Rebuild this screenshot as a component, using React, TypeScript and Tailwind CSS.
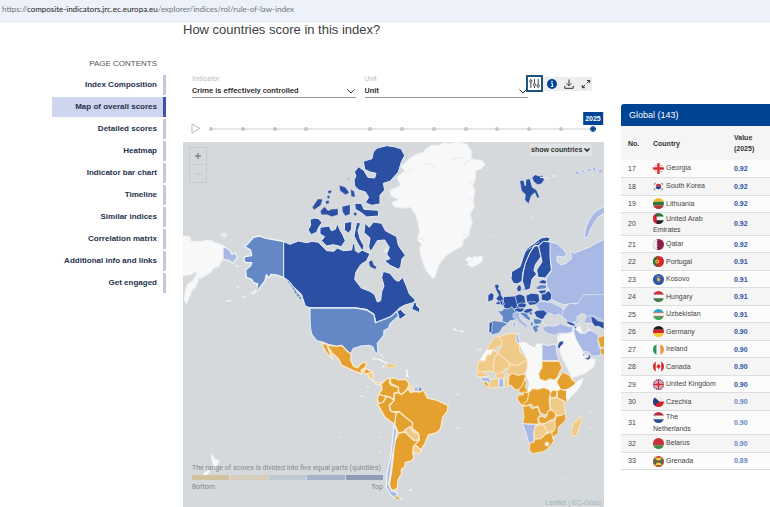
import { useState } from 'react';
import type { ReactNode } from 'react';

const sections = [
  'Index Composition',
  'Map of overall scores',
  'Detailed scores',
  'Heatmap',
  'Indicator bar chart',
  'Timeline',
  'Similar indices',
  'Correlation matrix',
  'Additional info and links',
  'Get engaged',
];

const years = [2013, 2014, 2015, 2016, null, 2018, 2019, 2020, 2021, 2022, 2023, 2024, 2025];

const hBands = (a: string, b: string, c: string) => (
  <>
    <path fill={a} d="M0 0h12v4H0z" />
    <path fill={b} d="M0 4h12v4H0z" />
    <path fill={c} d="M0 8h12v4H0z" />
  </>
);

const vBands = (a: string, b: string, c: string) => (
  <>
    <path fill={a} d="M0 0h4v12H0z" />
    <path fill={b} d="M4 0h4v12H4z" />
    <path fill={c} d="M8 0h4v12H8z" />
  </>
);

const flags: Record<string, ReactNode> = {
  ge: (
    <>
      <path fill="#f4f4f4" d="M0 0h12v12H0z" />
      <path fill="#e02a33" d="M4.700 0h2.600v4.700H12v2.600H7.300V12H4.700V7.300H0V4.700h4.700zM2.6 2.6h1v1h-1zM8.6 2.6h1v1h-1zM2.6 8.6h1v1h-1zM8.6 8.6h1v1h-1z" />
    </>
  ),
  kr: (
    <>
      <path fill="#f4f4f4" d="M0 0h12v12H0z" />
      <path fill="#c8313e" d="M3 6a3 3 0 0 1 6 0z" />
      <path fill="#1d3f8a" d="M3 6a3 3 0 0 0 6 0z" />
      <path stroke="#333" strokeWidth=".9" d="M1.2 4l1.3-2M9.5 2l1.3 2M1.2 8l1.3 2M9.5 10l1.3-2" />
    </>
  ),
  lt: hBands('#f3b72b', '#2c7a3d', '#b8343a'),
  ae: (
    <>
      {hBands('#1f7a3c', '#f4f4f4', '#222')}
      <path fill="#d0202c" d="M0 0h4v12H0z" />
    </>
  ),
  qa: (
    <>
      <path fill="#8a1f4b" d="M0 0h12v12H0z" />
      <path fill="#eee" d="M0 0h4l1 1.5L4 3l1 1.5L4 6l1 1.5L4 9l1 1.5L4 12H0z" />
    </>
  ),
  pt: (
    <>
      <path fill="#d8262c" d="M0 0h12v12H0z" />
      <path fill="#2c7a35" d="M0 0h4.5v12H0z" />
      <circle cx="4.7" cy="6" r="2.2" fill="#f6d33c" />
      <circle cx="4.7" cy="6" r="1" fill="#d8262c" />
    </>
  ),
  xk: (
    <>
      <path fill="#2b57a5" d="M0 0h12v12H0z" />
      <path fill="#d9b35a" d="M4 5l2-1.4L8.4 6 6.5 8.8 4.6 7.4z" />
      <path stroke="#eee" strokeWidth=".8" strokeDasharray=".8 .7" d="M3 3.4q3-1.8 6 0" fill="none" />
    </>
  ),
  hu: hBands('#c8303c', '#f4f4f4', '#3f7d4c'),
  uz: (
    <>
      {hBands('#31a3cc', '#f4f4f4', '#35a851')}
      <path stroke="#d33" strokeWidth=".6" d="M0 4h12M0 8h12" />
    </>
  ),
  de: hBands('#1c1c1c', '#d8202a', '#f5c629'),
  ie: vBands('#2f9455', '#f6f6f6', '#ee9540'),
  ca: (
    <>
      {vBands('#d8262c', '#f6f6f6', '#d8262c')}
      <path fill="#f6f6f6" d="M3 0h6v12H3z" />
      <path fill="#d8262c" d="M6 3l.7 1.3.8-.3-.1 1.2 1.3.2-.9 1 .3.7-1.7.2V9h-.8V7.300l-1.700-.2.3-.7-.9-1 1.300-.2L4.500 4l.8.3z" />
    </>
  ),
  gb: (
    <>
      <path fill="#253a80" d="M0 0h12v12H0z" />
      <path stroke="#f4f4f4" strokeWidth="2" d="M0 0l12 12M12 0L0 12" />
      <path stroke="#d3273a" strokeWidth=".8" d="M0 0l12 12M12 0L0 12" />
      <path stroke="#f4f4f4" strokeWidth="3.600" d="M6 0v12M0 6h12" />
      <path stroke="#d3273a" strokeWidth="2" d="M6 0v12M0 6h12" />
    </>
  ),
  cz: (
    <>
      <path fill="#eee" d="M0 0h12v6H0z" />
      <path fill="#d3222c" d="M0 6h12v6H0z" />
      <path fill="#223f85" d="M0 0l7 6-7 6z" />
    </>
  ),
  nl: hBands('#b5323f', '#f4f4f4', '#2c4e92'),
  by: (
    <>
      <path fill="#c63237" d="M0 0h12v8H0z" />
      <path fill="#3f8c3d" d="M0 8h12v4H0z" />
    </>
  ),
  gd: (
    <>
      <path fill="#cf2c33" d="M0 0h12v12H0z" />
      <path fill="#2d8048" d="M1.500 2h9v8h-9z" />
      <path fill="#f4d03c" d="M1.500 2h9L6 6zM1.500 10h9L6 6z" />
      <circle cx="6" cy="6" r="1.500" fill="#cf2c33" />
    </>
  ),
};

const rows = [
  { no: 17, flag: 'ge', name: 'Georgia', value: '0.92' },
  { no: 18, flag: 'kr', name: 'South Korea', value: '0.92' },
  { no: 19, flag: 'lt', name: 'Lithuania', value: '0.92' },
  { no: 20, flag: 'ae', name: 'United Arab\nEmirates', value: '0.92' },
  { no: 21, flag: 'qa', name: 'Qatar', value: '0.92' },
  { no: 22, flag: 'pt', name: 'Portugal', value: '0.91' },
  { no: 23, flag: 'xk', name: 'Kosovo', value: '0.91' },
  { no: 24, flag: 'hu', name: 'Hungary', value: '0.91' },
  { no: 25, flag: 'uz', name: 'Uzbekistan', value: '0.91' },
  { no: 26, flag: 'de', name: 'Germany', value: '0.90' },
  { no: 27, flag: 'ie', name: 'Ireland', value: '0.90' },
  { no: 28, flag: 'ca', name: 'Canada', value: '0.90' },
  { no: 29, flag: 'gb', name: 'United Kingdom', value: '0.90' },
  { no: 30, flag: 'cz', name: 'Czechia', value: '0.90' },
  { no: 31, flag: 'nl', name: 'The\nNetherlands', value: '0.90' },
  { no: 32, flag: 'by', name: 'Belarus', value: '0.90' },
  { no: 33, flag: 'gd', name: 'Grenada', value: '0.89' },
];

// quintile colours, bottom to top
const Q1 = '#e5a12f';
const Q2 = '#f0ca88';
const Q3 = '#a9b8e4';
const Q4 = '#6487c6';
const Q5 = '#2a4fa3';
const NONE = '#f7f8f7';
const SEA = '#d5d9dc';

function WorldMap() {
  return (
    <svg viewBox="0 0 421 365" className="block w-full bg-[#d5d9dc]" role="img" aria-label="World map of scores">
      {/* Bering Strait and Alaska */}
      <g transform="translate(0 -2) scale(.33333)" stroke="#eef3f8" strokeWidth="4" strokeLinejoin="round">
        <path fill={NONE} d="M-3 288L20 290L24 304L60 305L66 301L84 302L94 308L120 316V358L110 370L108 378L90 385L84 396L70 405L55 414L42 412L46 420L38 440L26 452L20 468L10 490L4 480L8 450L14 434L28 424L42 400L38 392L28 402L-3 408z" />
        <path fill={Q3} d="M120 318L140 330L146 342L158 340L163 354L148 370L138 361L120 358z" />
        <path fill="none" d="M115 284l8-4 8 5-7 6zM157 376l10 5M162 442l6-2M130 482l14 1M176 473l14-5M200 462l10-7" />
        <path fill={Q4} d="M228 288L250 295L278 300L302 305V412L280 405L264 403L258 414L250 404L246 422L240 430L225 450L210 463L222 444L224 432L212 428L206 418L190 412L188 390L203 377L206 368L188 368L182 358L186 350L206 347L203 330L185 320L200 305L212 292z" />
        <path fill="none" stroke={Q4} strokeWidth="6" d="M316 422l14 17 9 19 15 18" strokeDasharray="9 3" />
      </g>

      {/* Canada, its arctic islands and Greenland */}
      <g transform="translate(107 -2) scale(.33333)" stroke="#e6edf6" strokeWidth="3" strokeLinejoin="round">
        <path fill={NONE} d="M345 68L360 54L376 44L400 36L408 26L425 15L445 16L460 8L482 10L505 5L530 12L546 34L543 54L560 60L575 60L586 74L572 88L558 92L556 118L548 138L556 152L550 178L553 200L541 222L547 248L540 270L535 288L520 300L518 318L490 332L465 350L446 376L435 412L428 415L410 395L400 372L393 348L388 328L394 312L382 300L388 275L384 250L376 222L362 202L335 205L312 200L305 187L325 180L302 166L300 150L332 137L320 112L345 92L332 80z" />
        <path fill="none" stroke="#dfe2e4" strokeWidth="2" d="M402 70l22 3 14 14M482 58l22-5 16 4M540 60l-22 16M556 120l-20 8M550 182l-14-5M538 292l-22-14M382 298l14-2 6 10M348 95l20-8" />
        <path fill={NONE} d="M526 360L536 350L547 354L556 348L562 352L570 346L578 352L577 364L562 375L546 382L532 374L536 366z" />
        <path fill={Q5} d="M250 36L262 24L290 17L312 20L333 26L344 46L334 66L325 96L300 124L280 130L284 150L270 166L270 192L245 196L226 188L236 172L226 156L206 150L194 138L192 120L198 108L193 96L206 80L222 92L234 112L254 114L258 100L240 96L224 88L220 64L246 56z" />
        <path fill={Q5} d="M194 190L214 190L222 208L265 211L266 228L230 231L212 217L196 208z" />
        <path fill={Q5} strokeWidth="1" d="M148 136L166 142L178 158L166 164L150 152zM182 148L192 154L196 170L184 170zM173 114l5 2-2 5zM113 154l8-4 5 6-9 6zM111 168l7-2 2 8-7 2zM67 202L76 188L84 177L98 178L92 196L72 210zM91 213L104 200L114 212L124 208L144 206L144 224L126 230L112 224L94 224zM106 184l10-3 2 8-9 4zM156 200L180 194V222L166 228L158 216zM192 216l9 4-3 8-7-4z" />
        <path fill={Q5} d="M60 238L74 234L86 236L96 248L86 262L80 277L64 284L54 270L62 256zM90 262L118 258L124 272L136 268L142 250L150 270L158 284L166 302L154 320L130 314L110 318L94 302L104 290L90 282zM164 248L186 244L184 268L176 280L163 270zM200 246L212 250L204 272L210 296L222 318L218 334L204 312L192 288z" />
        <path fill={Q5} d="M225 250L238 262L250 246L275 250L286 272L320 290L325 316L346 346L336 356L332 380L326 388L300 376L284 362L300 356L290 342L298 322L284 300L262 302L248 326L240 334L236 320L240 294L222 278z" />
        <path fill={NONE} stroke="none" d="M285 322l8 4-3 14-7-4z" opacity=".7" />
        <path fill={Q5} d="M-19 305L0 313L25 303L50 308L66 304L85 307L100 322L110 332L132 334L142 324L160 332L185 330L188 310L194 312L196 332L206 338L216 330L240 341L230 362L212 374L198 396L194 418L214 444L240 454L254 464L262 486L272 482L275 456L282 438L275 412L280 394L300 400L316 420L326 424L338 412L350 440L358 462L376 480L370 488L345 495L328 504L318 516L332 508L340 518L350 524L330 538L320 522L300 532L282 540L258 549L252 522L230 508L195 503H60L46 498L34 462L10 440L-2 424L-19 412z" />
        <path fill={Q5} d="M236 366L246 360L252 376L260 380L256 388L240 380z" strokeWidth="1" />
        <path fill={Q5} d="M365 508L372 488L378 486L380 498L390 506L388 518L376 512z" />
        <path fill="none" strokeDasharray="5 4" d="M2 432l12 12 8 14 14 15 6 18" />
      </g>

      {/* USA, Central and South America */}
      <g transform="translate(107 138) scale(.33333)" stroke="#fbe9c8" strokeWidth="4" strokeLinejoin="round">
        <path stroke="#dce7f6" fill={Q4} d="M60 84H196L230 90L252 104L256 128L282 118L302 110L320 94L326 108L310 122L300 132L296 144L282 152L281 166L262 190L264 220L256 218L248 200L236 196L215 198L190 206L182 222L170 212L155 196L140 199L115 193L95 186L80 182L66 165L62 150L60 120z" />
        <path fill={Q1} d="M95 187L115 196L140 199L155 196L170 212L183 222L182 240L190 258L202 264L214 250L230 245L226 262L214 270L224 276L212 280L190 272L155 256L145 236L126 218L112 198L120 220L130 238L112 222L102 206z" />
        <path fill={Q1} d="M213 272l10 2 4-10 10 7 12 3-8 7-12 0-12-3z" />
        <path fill={Q2} d="M232 281l16-5 2 14-3 10-9-6z" />
        <path fill={Q2} stroke="#fbf3e2" strokeWidth="3" d="M248 302L258 308L272 309L284 305L288 310L270 315L254 312z" />
        <path fill="none" stroke="#f8f8f4" strokeWidth="4" d="M246 238l10-3 14 4 14 8 8 2M272 222l2 6M280 230l3 5M276 260h7M348 268l4 6M352 282l3 10M352 272l-2 18" />
        <path fill={Q2} strokeWidth="2" d="M290 254l10-3 12 3 8 6-11 2-9 2-12-3z" />
        <path fill={Q1} d="M286 300L300 292L298 308L304 316L326 322L325 336L312 340V360L298 350L276 346L266 342L276 328L274 312z" />
        <path fill={Q1} d="M300 296L312 294L324 299H348L358 312L352 326L344 336L334 344L326 338L325 321L303 311z" />
        <path fill="#f4ddb0" strokeWidth="2" d="M358 312l8 5 7 6-4 6 3 7-7 2-7-13-3-6z" />
        <path fill={Q3} strokeWidth="2" stroke="#eef3f8" d="M373 321l12-1 0 13-13 1z" />
        <path fill={Q4} strokeWidth="2" stroke="#eef3f8" d="M387 320l10 7-7 8-4-3z" />
        <path fill={Q1} d="M265 343L290 350L280 366L268 373L262 360z" />
        <path fill={Q1} d="M262 373L280 366L290 350L300 352L314 361L298 376L300 390L320 400L318 424L312 432L285 412L270 385z" />
        <path fill={Q1} d="M313 360V340L326 338L334 344L344 336L354 326L362 338L372 334L390 336L400 330L412 354L438 360L474 376L472 394L458 412L452 446L440 458L415 465L405 490L392 510L372 492L388 478L385 460L366 444L368 428L346 412L326 395L304 395L298 378z" />
        <path fill={Q1} d="M318 400L328 395L346 412L368 428L366 442L345 450L342 456L326 459L314 434z" />
        <path fill={Q2} d="M345 450L360 440L370 456L386 462V480L372 482L350 466z" />
        <path fill={Q2} d="M372 492L396 512L385 521L370 516z" />
        <path fill={Q1} d="M326 459L345 456L372 482L388 480L370 500L368 520L372 532L365 542L346 548L345 560L334 568L335 580L324 600L322 626L305 632L298 615L304 580L310 530L312 490z" />
        <path fill={Q3} stroke="#eef3f8" d="M312 432L320 452L316 480L308 525L302 575L296 612L304 632L322 638L320 657L302 645L289 622L291 580L302 530L308 480z" />
        <path fill={Q1} strokeWidth="2" d="M315 645l4 14 12-3z" />
        <path fill="none" stroke="#f4f6f7" strokeWidth="4" d="M330 656h8M357 630h10M211 348l8 3M232 318l3 4M490 147l12 4M508 153l10 2M500 343h5M500 444h5M268 515h4M265 473h4M148 473h4" />
      </g>

      {/* Northern Europe and Russia */}
      <g transform="translate(287 -2) scale(.33333)" stroke="#e6edf8" strokeWidth="3" strokeLinejoin="round">
        <path fill={Q5} strokeWidth="2" d="M149 122L160 120L166 138L168 118L180 116L187 142L200 150L209 172L202 175L194 158L184 168L176 192L164 180L166 164L154 152zM186 112L196 104L208 108L218 106L223 120L214 132L202 134L190 124z" />
        <path fill={Q3} d="M314 98l10-6 5 7-7 6zM334 92l8-3 2 8-9 2zM350 88l12-4 2 9-8 3zM368 84l10-4-1 14-9-2zM384 92l10-5 6 8-10 6zM346 103l9-1-2 7zM362 102l8 3-7 4z" strokeWidth="2" />
        <path fill={Q3} d="M342 291L348 260L358 238L372 218L386 208L403 200V218L384 232L372 250L360 272L354 292z" />
        <path fill={Q3} d="M238 304L262 312L278 326L290 342L284 352L262 348L260 362L272 375L288 370L304 356L302 332L312 340L345 326L358 322L378 310L403 298V550H313L314 518L320 490L280 494L246 480L240 455L230 436L228 416L245 392L240 350z" />
        <path fill={Q5} d="M241 294L236 304L220 305L206 316L192 318L181 336L166 372L158 400L156 424L142 432L130 430L123 416L125 395L150 380L160 350L168 328L195 308L214 294L230 291z" />
        <path fill={Q5} d="M181 336L194 318L206 318L213 350L196 374L192 392L200 402L186 418L181 446L166 452L157 424L160 396L166 370z" />
        <path fill={Q5} d="M206 318L220 304L240 306V350L244 390L226 414L204 412L200 390L216 366L212 346z" />
        <path fill="none" stroke="#e6edf8" strokeWidth="2" d="M165 335l9-7 12-6 9-9 14-7" />
        <path fill={Q5} strokeWidth="2" d="M143 437l8-3 3 9-1 11-9 1-4-8zM157 447l6-2-1 9zM207 424l12-5 10 3-1 10-13-1-7-2zM203 452L228 449V460L214 463zM214 462L224 458L238 452L245 464L244 478L232 484L214 480zM168 466L184 460L206 462L209 482L200 494L170 488zM134 467L150 462L164 468L167 490L166 502L150 514L134 506L130 490z" />
        <path fill={Q4} strokeWidth="2" d="M199 440l12-6 17 1 2 10-12 2-9 1-10 1z" />
        <path fill={Q5} strokeWidth="2" d="M73 436L82 432L88 438L84 446L92 454L94 466L104 480L100 490L82 494L76 490L86 484L78 476L86 466L78 450zM54 466L64 458L72 464L70 480L54 486z" />
        <path fill="none" strokeWidth="4" d="M92 410l3 4M60 287l4 2M183 232l6 3M210 112h12M226 114h9M248 108h10" />
      </g>

      {/* Southern Europe, Middle East and Africa */}
      <g transform="translate(277 158) scale(.33333)" stroke="#fbe7c2" strokeWidth="3" strokeLinejoin="round">
        <g stroke="#e9eff8" strokeWidth="2">
          <path fill={Q3} d="M240 3l35 5 30 15 14 25-20 2-30-4-20 2-12-18-10-14z" />
          <path fill={Q3} d="M310 30l18-20 24 2 20-28h64v84l-24-15-20-8-14 5-16-8-14 10 2 12-20 5-16-5-8-18z" />
          <path fill={Q5} d="M118 3l12-1 3 12-9 3zM131-10l34-2 6 22 2 8-10 10-28-1-8-14zM171 14l14-6 16 5-6 10-16 2zM160 28l20-5 12 0 3 9-14 5-17-1zM190 29l24-5 5 9-10 8-19-3zM201 6l24-1 8 8-24 3zM206 37l12-3-3 11-10-2z" />
          <path fill={Q5} d="M222 37l10-6 19-1 8 7 6 9-8 11-14 1-14-7z" />
          <path fill={Q4} d="M112 32L126 33L132 25L144 27L156 20L164 32L172 34V58L150 62L142 70L126 65L128 50z" />
          <path fill={Q4} d="M88 65L104 62L130 66L144 72L128 82L118 98L98 104L90 98z" />
          <path fill={Q5} d="M88 66l10 3-3 13 1 14-9 2z" />
          <path fill={Q3} d="M160 40l15-4 6 5-4 8 9 13 18 14-4 4-4 9-4-11-16-12-8-11-9-3zM159 66l8 2-1 12-7 0z" />
          <path fill={Q4} d="M178 40l10-3 14 3 3 8 7 6-3 9-11-7-10-9zM222 55l24 4-3 12-17 3-6-9zM213 64l7 6-2 12-7-8zM216 79l15-4 9 4-8 5 3 9-9 5-7-10z" />
          <path fill={SEA} d="M248 62l8-16 12-8 16 9 12-5 8 7 16 12 8 15-10 4-28-7-22 5-16-4z" />
          <path fill={NONE} d="M299 102l36-7 8-14 14-2 13 16 18-8 24 20-10 40-55-10-40-5z" />
          <path fill={Q3} d="M248 80L266 77L284 79L302 71L322 78L338 82L336 96L320 100L296 99L284 106L262 100L250 92z" />
          <path fill={Q5} d="M320 63l14 4 12 6-3 6-12-4-10-5zM342 78l9 2-4 9z" />
          <path fill={Q3} d="M340 84L352 92L360 100H376L388 91L404 97L414 106V124L416 138L426 156L418 167L398 168L385 156L366 152L352 132L344 108z" />
          <path fill={SEA} d="M354 50l10-9 12 2 2 12-6 9 10 10 2 14-7 10-11-3-4-18-8-12z" />
          <path fill={Q5} d="M392 48l10 4 11 10 19 4v22l-16-9-12 0-8-12z" />
          <path fill={Q1} stroke="#fbe7c2" d="M414 113L436 106V142L420 140zM420 146H436V166L424 162z" />
          <path fill={NONE} d="M293 108L313 102L341 98L350 122L362 142L372 162L388 174L406 178L402 200L376 220L336 234L322 204L306 174L294 140z" />
          <path fill={Q5} strokeWidth="1" d="M293 140L298 126L310 122L309 132L302 138L298 146zM374 174L384 173L390 163L391 173L384 180zM368 164l4-2 1 7z" />
        </g>
        <path fill={NONE} stroke="#fff" d="M178 130L197 128L210 138L224 145L232 132L246 133L247 203L238 223L234 238L254 244L284 239L294 224L302 240L300 255L314 272L290 279H212L190 286L206 272L208 246L200 230L204 180z" />
        <path fill={Q2} d="M118 111L134 104L156 100L172 101L173 117L177 130L180 156L190 166L202 180L186 188L172 197L158 196L124 169L112 156L126 140z" />
        <path fill={Q2} d="M94 124L108 111L118 110L124 120L126 134L112 142L102 150L80 152z" />
        <path fill={NONE} stroke="#fff" d="M62 180L70 166L80 152L100 150V163L85 166L80 180z" />
        <path fill={Q3} stroke="#e9eff8" d="M168 103l9-1-1 11 4 12-7 6-5-15z" />
        <path fill={Q2} d="M54 184L76 182L80 165L92 164L100 150L118 163L110 168L108 214H78L60 218L52 212z" />
        <path fill={Q2} d="M104 167L118 162L148 190L149 204L134 208L124 220L112 226L102 216L100 204z" />
        <path fill={Q2} d="M150 192L172 197L202 180L201 208L192 224L174 226L152 222L144 226L138 214L146 206z" />
        <path fill={Q2} d="M51 216l12-2 14 6 10 8-24 3-13-2zM106 225l12-8 10 1 9 10-4 7-16 1-8-3zM90 240l14-4 12 2-1 23-11 1-9 5-7-11zM133 234l8-4 2 30-8 2z" />
        <path fill={Q3} stroke="#e9eff8" d="M62 234l13-2 12 1 5 12-6 5-6-7-9 1-8-6zM118 235l11-1 3 25-12 5-4-8z" />
        <path fill={Q1} d="M69 249l9-5 7 10 6 10-11-6z" />
        <path fill={Q3} stroke="#e9eff8" d="M246 132L266 137L284 132L290 142L288 150L297 182H246z" />
        <path fill={Q1} d="M246 184H298L306 204L298 217L293 230L284 240L270 236L256 243L240 238L236 222L242 208L246 206z" />
        <path fill={Q1} d="M147 228L156 220L174 226L192 222L198 230L195 244L184 262L176 270L164 268L156 258L145 254z" />
        <path fill={Q1} d="M195 232L199 250L196 262L204 276L190 280L176 277L178 266L188 256z" />
        <path fill={Q1} d="M174 286L190 284V276L206 278L214 270L210 290L202 308L190 318L182 312L172 298z" />
        <path fill={Q1} d="M207 278L218 266L234 268L252 263L268 270L272 280L267 296L270 328L262 336L264 344L252 344L240 337L234 318L220 322L214 312L196 318L188 314L202 302z" />
        <path fill={Q1} d="M290 246L300 228L308 217L318 221L330 228L336 240L348 248L338 258L326 266L314 270L302 268zM292 272L302 268L320 272V292L324 300L316 306L306 299L292 294zM271 279L279 270L291 272L290 284L286 292L271 294z" />
        <path fill={NONE} stroke="#fff" d="M321 270L338 261L350 247L368 236L362 254L348 274L334 287L322 302L319 290z" />
        <path fill={Q2} d="M272 294L290 293L304 300L312 308V322L317 340L304 346H290L284 338L274 330L270 314z" />
        <path fill={Q1} d="M188 319L208 317L216 326L234 321L237 336L242 344L233 354L236 373L212 372H188L192 350z" />
        <path fill={Q1} d="M236 352L246 349L256 354L262 344V336L272 330L284 336L288 348L280 358L268 362L256 370L238 370z" />
        <path fill={Q1} d="M288 349L304 346L317 340V360L306 372L294 382L295 400L280 410L276 420L272 404L281 390L284 376L278 366L286 362z" />
        <path fill={Q3} stroke="#e9eff8" d="M187 371L212 373L232 373L224 380L222 398V424L210 431L203 420L198 400z" />
        <path fill={Q2} d="M225 381L238 375L250 374L258 390L262 394L254 404L242 416L232 415L224 420L222 402zM250 373L264 367L274 361L285 367L286 382L281 394L268 397L258 388z" />
        <path fill={Q1} d="M209 430L222 426L224 418L232 417L244 416L258 402L275 396L278 414L282 422L272 436L260 449L246 456L230 458L216 461L208 448z" />
        <circle cx="261" cy="432" r="6" fill={NONE} />
        <path fill={Q2} d="M360 347L366 364L360 376L354 396L348 408L336 406L332 394L338 382L337 370L352 362z" />
        <path fill="none" stroke="#f2f4f5" strokeWidth="4" d="M48 148h6M58 150l6-2M389 334h5M386 386l5-2M395 362v3M8 95h5M305 535h4" />
      </g>

      {/* New Zealand */}
      <path fill={NONE} d="M29 311l3 6 5 1-3 6-4 3 0-5-2-6zM28 327l-2 4-6 6-3-1 5-6z" />
    </svg>
  );
}

function Dropdown({ id, label, value }: { id: string; label: string; value: string }) {
  return (
    <div className="relative min-w-0 flex-1">
      <label htmlFor={id} className="block text-[7px] leading-[9px] text-[#bbb]">{label}</label>
      <select
        id={id}
        className="block h-[14px] w-full appearance-none border-b border-[#999] bg-transparent pt-px text-[8px] font-medium leading-3 text-[#222]"
      >
        <option>{value}</option>
      </select>
      <svg viewBox="0 0 8 5" className="pointer-events-none absolute right-px bottom-1 h-[5px] w-2" fill="none" stroke="#333">
        <path d="M.5.5L4 4 7.500.5" />
      </svg>
    </div>
  );
}

function Toolbar() {
  return (
    <div className="relative z-10 -ml-[2px] flex h-[17px] items-center">
      <button aria-label="Settings" className="flex size-[17px] items-center justify-center border-2 border-[#1d5480] bg-white">
        <svg viewBox="0 0 12 12" className="size-[11px]" fill="none" stroke="#333">
          <path d="M2 1v1M2 5v6M6 1v5M6 9v2M10 1v6M10 10v1" />
          <circle cx="2" cy="3.500" r="1.300" />
          <circle cx="6" cy="7.300" r="1.300" />
          <circle cx="10" cy="8.500" r="1.300" />
        </svg>
      </button>
      <div className="flex h-[14px] w-[49px] items-center justify-between bg-[#eeeeee] pr-px pl-1">
        <button aria-label="Information">
          <svg viewBox="0 0 10 10" className="size-[10px]">
            <circle cx="5" cy="5" r="5" fill="#004494" />
            <path d="M4 4.300h1.400v3M3.800 7.500h2.600" stroke="#fff" fill="none" />
            <circle cx="5" cy="2.500" r=".8" fill="#fff" />
          </svg>
        </button>
        <button aria-label="Download">
          <svg viewBox="0 0 10 10" className="size-[10px]" fill="none" stroke="#333">
            <path d="M5 .5v6M2.500 4.300L5 6.700l2.500-2.400M.8 6.800v2.500h8.400V6.800" />
          </svg>
        </button>
        <button aria-label="Full screen">
          <svg viewBox="0 0 10 10" className="size-[10px]" fill="none" stroke="#333">
            <path d="M6 1.500h2.700v2.700M8.500 1.700L5.800 4.400M4 8.700H1.300V6M1.500 8.500l2.700-2.700" />
          </svg>
        </button>
      </div>
    </div>
  );
}

function Timeline({ year, onChange }: { year: number; onChange: (y: number) => void }) {
  return (
    <div className="mt-[23px] flex h-[15px] items-center pr-[9px] pl-2">
      <button aria-label="Play">
        <svg viewBox="0 0 10 11" className="h-[11px] w-[10px]" fill="none" stroke="#bbb">
          <path d="M1 1l8 4.500L1 10z" />
        </svg>
      </button>
      <div className="relative ml-2 flex flex-1 items-center justify-between">
        <div className="absolute inset-x-0 top-1/2 h-px -translate-y-1/2 bg-[#d0d0d0]" />
        {years.map((y, i) =>
          y === null ? (
            <span key={i} className="size-1" />
          ) : (
            <button
              key={i}
              aria-label={String(y)}
              onClick={() => onChange(y)}
              className={`relative size-1 rounded-full ${y === year ? 'bg-[#004494] outline outline-[#004494]' : 'bg-[#c4c4c4]'}`}
            >
              {y === year && (
                <span className="absolute bottom-[6px] left-1/2 -translate-x-1/2 bg-[#004494] px-[2px] text-[7px] leading-[13px] font-bold text-white">
                  {y}
                </span>
              )}
            </button>
          ),
        )}
      </div>
    </div>
  );
}

function Legend() {
  return (
    <div className="absolute bottom-[15px] left-[9px] w-[191px] font-[Roboto,sans-serif] text-[7px] leading-[10px] text-[#85888b]">
      <p className="whitespace-nowrap">The range of scores is divided into five equal parts (quintiles)</p>
      <div className="my-[2px] grid h-[5px] grid-cols-5 gap-px">
        <span className="bg-[#d3c2a0]" />
        <span className="bg-[#d6cdbb]" />
        <span className="bg-[#bdc9d3]" />
        <span className="bg-[#a5b4c7]" />
        <span className="bg-[#8f9eb6]" />
      </div>
      <div className="flex justify-between">
        <span>Bottom</span>
        <span>Top</span>
      </div>
    </div>
  );
}

function MapPanel() {
  return (
    <div className="relative mt-[6px]">
      <WorldMap />
      <div className="absolute top-[5px] left-[6px] flex w-[18px] flex-col border border-[#c6cacd] text-[#666]">
        <button aria-label="Zoom in" className="flex h-[17px] items-center justify-center border-b border-[#c9cdd0]">
          <svg viewBox="0 0 8 8" className="size-2" stroke="currentColor"><path d="M1 4h6M4 1v6" /></svg>
        </button>
        <button aria-label="Zoom out" className="flex h-[17px] items-center justify-center text-[#c2c6c9]">
          <svg viewBox="0 0 8 8" className="size-2" stroke="currentColor"><path d="M0 4h8" /></svg>
        </button>
      </div>
      <div className="absolute top-[2px] right-3 bg-[#e0e3e5]">
        <select aria-label="Map layer" className="block h-3 w-[62px] appearance-none pl-px text-[7px] leading-3 font-bold text-[#333]">
          <option>show countries</option>
        </select>
        <svg viewBox="0 0 6 4" className="pointer-events-none absolute top-[4px] right-[2px] h-1 w-[6px]" fill="none" stroke="#222" strokeWidth="1.500">
          <path d="M.5.5L3 3 5.500.5" />
        </svg>
      </div>
      <Legend />
      <div className="absolute right-0 bottom-0 px-[2px] text-[7px] leading-[9px] text-[#9db4bf]">
        <a href="#leaflet">Leaflet</a> | <a href="#gisco">EC-Gisco</a>
      </div>
    </div>
  );
}

function ScoreTable() {
  return (
    <section className="mt-[82px] w-[149px] shrink-0">
      <h2 className="h-[22px] rounded-tl-[3px] bg-[#004494] pl-2 text-[9px] leading-[22px] text-white">Global (143)</h2>
      <table className="w-full table-fixed border-collapse text-left text-[7px] leading-[11px] text-[#444]">
        <thead className="bg-[#f5f5f5] text-[#333]">
          <tr className="h-[34px]">
            <th className="w-8 pl-[7px]">No.</th>
            <th className="w-[81px]">Country</th>
            <th className="whitespace-pre-line">{'Value\n(2025)'}</th>
          </tr>
        </thead>
        <tbody>
          {rows.map((r) => (
            <tr key={r.no} className="h-[17px] border-b border-[#dedede] bg-[#fcfcfc] even:h-[18px] even:bg-[#f5f5f5]">
              <td className="pl-[7px]">{r.no}</td>
              <td className="whitespace-pre-line">
                <svg viewBox="0 0 12 12" className="mr-[2px] inline-block size-[11px] rounded-full align-middle">
                  {flags[r.flag]}
                </svg>
                {r.name}
              </td>
              <td className={`font-bold ${r.no < 30 ? 'text-[#2a4fa3]' : 'text-[#6487c6]'}`}>{r.value}</td>
            </tr>
          ))}
        </tbody>
      </table>
    </section>
  );
}

export default function App() {
  const [active, setActive] = useState('Map of overall scores');
  const [year, setYear] = useState(2025);

  return (
    <div className="min-h-screen overflow-hidden bg-white font-['Liberation_Sans',Arial,sans-serif]">
      <header className="h-[22px] border-b border-[#e4e7ee] bg-[#edf1fa] pl-[2px] font-[Lato,sans-serif] text-[8px] leading-[19px] text-[#70757c]">
        https://<span className="text-[#222]">composite-indicators.jrc.ec.europa.eu</span>/explorer/indices/rol/rule-of-law-index
      </header>
      <div className="flex gap-[17px] pl-[52px]">
        <nav className="mt-[36px] w-[114px] shrink-0 text-right text-[8px]">
          <p className="mb-[5px] pr-[9px] leading-3 text-[#555]">PAGE CONTENTS</p>
          <ul className="flex flex-col gap-[2px]">
            {sections.map((s) => (
              <li key={s}>
                <a
                  href="#section"
                  onClick={() => setActive(s)}
                  className={`block h-5 border-r-[3px] pr-[6px] leading-5 font-bold text-[#26324b] ${
                    s === active ? 'border-[#3a52ab] bg-[#cdd5ef]' : 'border-[#c3c8de]'
                  }`}
                >
                  {s}
                </a>
              </li>
            ))}
          </ul>
        </nav>

        <main className="min-w-0 flex-1">
          <h1 className="text-[13px] leading-[15px] text-[#404040]">How countries score in this index?</h1>
          <div className="mt-[38px] flex pr-3 pl-[9px] font-[Roboto,sans-serif]">
            <div className="flex flex-1 gap-[9px]">
              <Dropdown id="indicator" label="Indicator" value="Crime is effectively controlled" />
              <Dropdown id="unit" label="Unit" value="Unit" />
            </div>
            <Toolbar />
          </div>
          <Timeline year={year} onChange={setYear} />
          <MapPanel />
        </main>

        <ScoreTable />
      </div>
    </div>
  );
}
